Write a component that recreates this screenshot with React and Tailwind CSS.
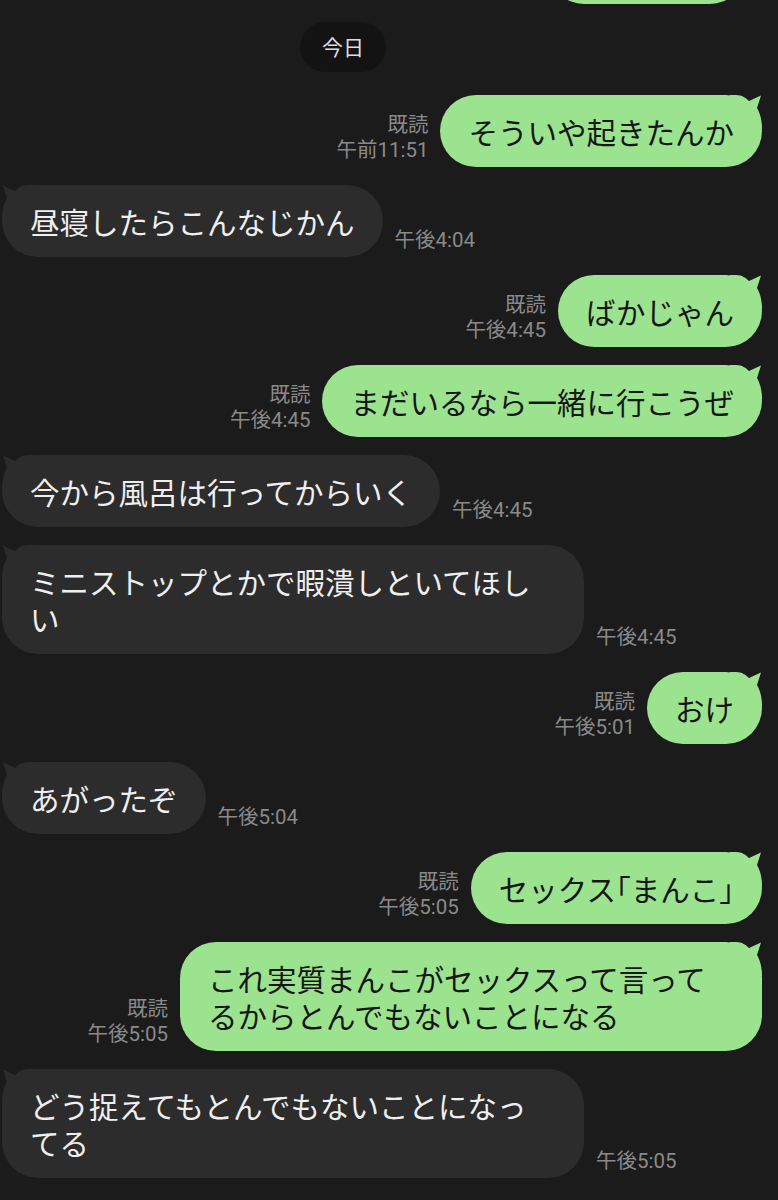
const messages = [
  { me: true, text: ['そういや起きたんか'], time: '午前11:51' },
  { me: false, text: ['昼寝したらこんなじかん'], time: '午後4:04' },
  { me: true, text: ['ばかじゃん'], time: '午後4:45' },
  { me: true, text: ['まだいるなら一緒に行こうぜ'], time: '午後4:45' },
  { me: false, text: ['今から風呂は行ってからいく'], time: '午後4:45' },
  { me: false, text: ['ミニストップとかで暇潰しといてほし', 'い'], time: '午後4:45' },
  { me: true, text: ['おけ'], time: '午後5:01' },
  { me: false, text: ['あがったぞ'], time: '午後5:04' },
  { me: true, text: ['セックス「まんこ」'], time: '午後5:05' },
  { me: true, text: ['これ実質まんこがセックスって言って', 'るからとんでもないことになる'], time: '午後5:05' },
  { me: false, text: ['どう捉えてもとんでもないことになっ', 'てる'], time: '午後5:05' },
];

const jp = "font-['Noto_Sans_CJK_JP',sans-serif]";

// corner "ear" of a LINE bubble
const Tail = ({ color, left }) => (
  <svg
    width="32"
    height="34"
    viewBox="0 0 32 34"
    className={left ? 'absolute top-0 left-0 -scale-x-100' : 'absolute top-0 right-0'}
  >
    <path d="M0 0 H6 C12 0 16 3 19 6 L31 0.5 L27 13 C30 18 32 25 32 34 H0 Z" fill={color} />
  </svg>
);

// narrow the 「」 brackets like the phone does
const renderLine = (text) =>
  text.split(/([「」])/).map((part, i) =>
    part === '「' || part === '」' ? (
      <span key={i} className="[font-feature-settings:'halt']">
        {part}
      </span>
    ) : (
      part
    )
  );

const Bubble = ({ me, text }) => (
  <div
    className={`relative rounded-[36px] px-[28px] py-[17.5px] text-[29.5px] leading-[37px] whitespace-nowrap ${jp} ${
      text.length > 1 ? 'w-[582px]' : ''
    } ${me ? 'bg-[#9be38f] text-[#161616]' : 'bg-[#2c2c2c] text-[#efefef]'}`}
  >
    <Tail color={me ? '#9be38f' : '#2c2c2c'} left={!me} />
    {text.map((line, i) => (
      <div key={i} className="relative">
        {renderLine(line)}
      </div>
    ))}
  </div>
);

const Meta = ({ me, time }) => (
  <div className="mb-[4px] shrink-0 text-right text-[20.5px] leading-[25px] text-[#8a8a8a] font-['Roboto','Noto_Sans_CJK_JP',sans-serif]">
    {me && <div>既読</div>}
    <div>{time}</div>
  </div>
);

export default function App() {
  return (
    <div className="flex min-h-[1200px] flex-col overflow-hidden bg-[#1b1b1b]">
      {/* end of the previous bubble, cut off by the top edge */}
      <div className="-mt-[66px] mr-[33px] h-[70px] w-[196px] self-end rounded-[36px] bg-[#9be38f]" />

      <div
        className={`ml-[300px] mt-[18px] flex h-[50px] w-fit items-center rounded-full bg-[#131313] px-[22px] text-[21px] text-[#dedede] ${jp}`}
      >
        今日
      </div>

      <div className="mt-[23px] flex flex-col gap-[18px]">
        {messages.map((m, i) =>
          m.me ? (
            <div key={i} className="flex items-end justify-end gap-[12px] pr-[16px]">
              <Meta me time={m.time} />
              <Bubble me text={m.text} />
            </div>
          ) : (
            <div key={i} className="flex items-end gap-[12px] pl-[2px]">
              <Bubble text={m.text} />
              <Meta time={m.time} />
            </div>
          )
        )}
      </div>
    </div>
  );
}
